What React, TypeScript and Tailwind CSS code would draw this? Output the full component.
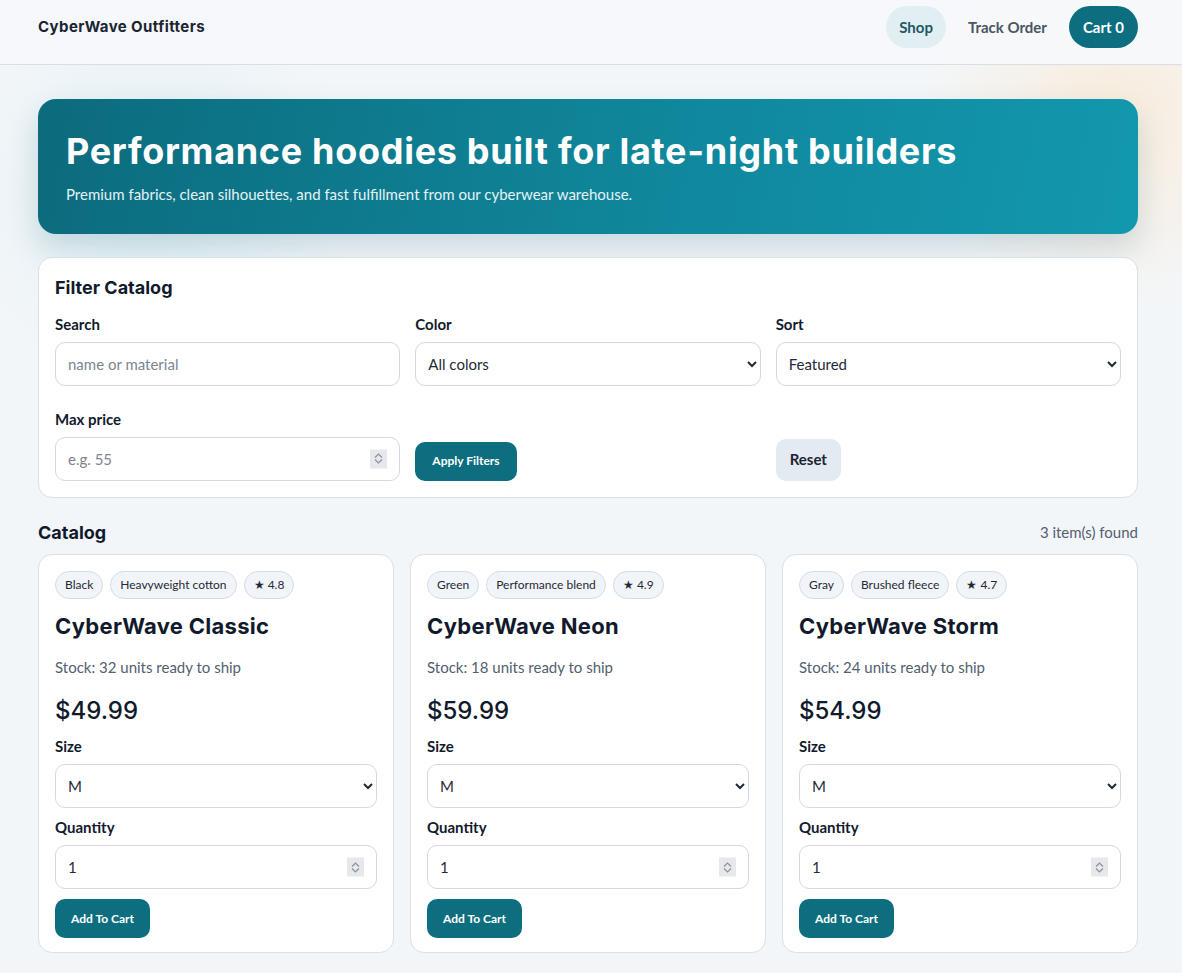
import { useState } from 'react';

const products = [
  {
    name: 'CyberWave Classic',
    color: 'Black',
    material: 'Heavyweight cotton',
    rating: '4.8',
    stock: 32,
    price: '$49.99',
  },
  {
    name: 'CyberWave Neon',
    color: 'Green',
    material: 'Performance blend',
    rating: '4.9',
    stock: 18,
    price: '$59.99',
  },
  {
    name: 'CyberWave Storm',
    color: 'Gray',
    material: 'Brushed fleece',
    rating: '4.7',
    stock: 24,
    price: '$54.99',
  },
];

const heading = "font-['Inter',sans-serif]";
const field =
  'h-[44px] w-full rounded-[10px] border border-[#d3d9e0] bg-white text-[15px] text-[#1f2a37] outline-none';
const label = 'block text-[15px] font-bold leading-[20px] text-[#111a2c]';

// chromium hides the spin buttons until hover, so draw them
function Spinner() {
  return (
    <span className="pointer-events-none absolute right-[13px] top-1/2 flex h-[19px] w-[17px] -translate-y-1/2 flex-col items-center justify-center bg-[#e6e8eb]">
      <svg width="9" height="6" viewBox="0 0 9 6" fill="none" stroke="#8a929c" strokeWidth="1.2">
        <path d="M1 5l3.5-3.5L8 5" />
      </svg>
      <svg width="9" height="6" viewBox="0 0 9 6" fill="none" stroke="#8a929c" strokeWidth="1.2">
        <path d="M1 1l3.5 3.5L8 1" />
      </svg>
    </span>
  );
}

function ProductCard({ product }: { product: (typeof products)[number] }) {
  const [size, setSize] = useState('M');
  const [qty, setQty] = useState('1');

  return (
    <div className="rounded-[14px] border border-[#d8e0e8] bg-white px-4 pt-4 pb-[14px]">
      <div className="flex gap-[7px]">
        {[product.color, product.material, `★ ${product.rating}`].map((chip) => (
          <span
            key={chip}
            className="flex h-[28px] items-center rounded-full border border-[#d3dde6] bg-[#f1f5f9] px-[9px] text-[12px] text-[#1f2a37]"
          >
            {chip}
          </span>
        ))}
      </div>
      <h3 className={`${heading} mt-[11px] text-[22px] font-bold tracking-[0.3px] text-[#111a2c]`}>
        {product.name}
      </h3>
      <p className="mt-[13px] text-[15px] text-[#536070]">
        Stock: {product.stock} units ready to ship
      </p>
      <p className={`${heading} mt-[15px] text-[24px] font-medium text-[#111a2c]`}>{product.price}</p>
      <label className={`${label} mt-[7px]`}>Size</label>
      <select
        value={size}
        onChange={(e) => setSize(e.target.value)}
        className={`${field} mt-[8px] pl-[8px] pr-[6px]`}
      >
        <option>S</option>
        <option>M</option>
        <option>L</option>
        <option>XL</option>
      </select>
      <label className={`${label} mt-[9px]`}>Quantity</label>
      <div className="relative mt-[8px]">
        <input
          type="number"
          value={qty}
          onChange={(e) => setQty(e.target.value)}
          className={`${field} px-3 [appearance:textfield] [&::-webkit-inner-spin-button]:appearance-none`}
        />
        <Spinner />
      </div>
      <button className="mt-[10px] h-[39px] rounded-[10px] bg-[#0d6e7f] px-[16px] text-[12px] font-bold text-white">
        Add To Cart
      </button>
    </div>
  );
}

export default function App() {
  return (
    <div className="relative min-h-screen overflow-hidden bg-[#f3f6f9] font-['Lato',sans-serif] text-[#111a2c]">
      <div className="pointer-events-none absolute right-[-140px] top-[-60px] h-[360px] w-[420px] rounded-full bg-[radial-gradient(circle,rgba(253,228,195,0.55),rgba(253,228,195,0)_70%)]" />
      <div className="pointer-events-none absolute left-[-100px] top-[40px] h-[300px] w-[500px] rounded-full bg-[radial-gradient(circle,rgba(200,232,236,0.4),rgba(200,232,236,0)_70%)]" />

      <header className="relative border-b border-[#d9dee4] bg-[#f6f8fb]/90">
        <div className="ml-[38px] flex w-[1100px] items-center justify-between pt-[6px] pb-[16px]">
          <span className={`${heading} text-[15px] font-bold tracking-[0.4px] text-[#1b2432]`}>
            CyberWave Outfitters
          </span>
          <nav className="flex items-center gap-[8px]">
            <a className="flex h-[42px] items-center rounded-full bg-[#e2eff2] px-[13px] text-[15px] font-bold text-[#1d5866]">
              Shop
            </a>
            <a className="flex h-[42px] items-center rounded-full px-[14px] text-[15px] font-bold text-[#4b5563]">
              Track Order
            </a>
            <a className="flex h-[42px] items-center rounded-full bg-[#0d6e7f] px-[14px] text-[15px] font-bold text-white">
              Cart 0
            </a>
          </nav>
        </div>
      </header>

      <main className="relative ml-[38px] w-[1100px] pt-[34px] pb-[20px]">
        <section className="rounded-[18px] bg-[linear-gradient(100deg,#0c6b7d_0%,#10869b_55%,#1298ae_100%)] px-[28px] pt-[30px] pb-[28px] shadow-[0_14px_30px_rgba(14,90,110,0.18)]">
          <h1 className={`${heading} text-[36px] font-bold leading-[44px] tracking-[0.7px] text-white`}>
            Performance hoodies built for late-night builders
          </h1>
          <p className="mt-[10px] text-[15px] text-[#e4f3f6]">
            Premium fabrics, clean silhouettes, and fast fulfillment from our cyberwear warehouse.
          </p>
        </section>

        <section className="mt-[23px] rounded-[14px] border border-[#d8e0e8] bg-white px-4 pt-[16px] pb-[16px]">
          <h2 className={`${heading} text-[18px] font-bold text-[#111a2c]`}>Filter Catalog</h2>
          <div className="mt-[13px] grid grid-cols-3 gap-x-[15px] gap-y-[23px]">
            <div>
              <label className={label}>Search</label>
              <input
                placeholder="name or material"
                className={`${field} mt-[8px] px-3 placeholder:text-[#7b8593]`}
              />
            </div>
            <div>
              <label className={label}>Color</label>
              <select className={`${field} mt-[8px] pl-[8px] pr-[6px]`}>
                <option>All colors</option>
                <option>Black</option>
                <option>Green</option>
                <option>Gray</option>
              </select>
            </div>
            <div>
              <label className={label}>Sort</label>
              <select className={`${field} mt-[8px] pl-[8px] pr-[6px]`}>
                <option>Featured</option>
                <option>Price: low to high</option>
                <option>Price: high to low</option>
              </select>
            </div>
            <div>
              <label className={label}>Max price</label>
              <div className="relative mt-[8px]">
                <input
                  type="number"
                  placeholder="e.g. 55"
                  className={`${field} px-3 placeholder:text-[#7b8593] [appearance:textfield] [&::-webkit-inner-spin-button]:appearance-none`}
                />
                <Spinner />
              </div>
            </div>
            <div className="flex items-end">
              <button className="h-[39px] rounded-[10px] bg-[#0d6e7f] px-[17px] text-[12px] font-bold text-white">
                Apply Filters
              </button>
            </div>
            <div className="flex items-end">
              <button className="h-[42px] rounded-[10px] bg-[#e3eaf1] px-[14px] text-[15px] font-bold text-[#1b2432]">
                Reset
              </button>
            </div>
          </div>
        </section>

        <div className="mt-[21px] flex items-center justify-between">
          <h2 className={`${heading} text-[18px] font-bold`}>Catalog</h2>
          <span className="text-[15px] text-[#536070]">3 item(s) found</span>
        </div>

        <div className="mt-[8px] grid grid-cols-3 gap-[16px]">
          {products.map((p) => (
            <ProductCard key={p.name} product={p} />
          ))}
        </div>
      </main>
    </div>
  );
}
